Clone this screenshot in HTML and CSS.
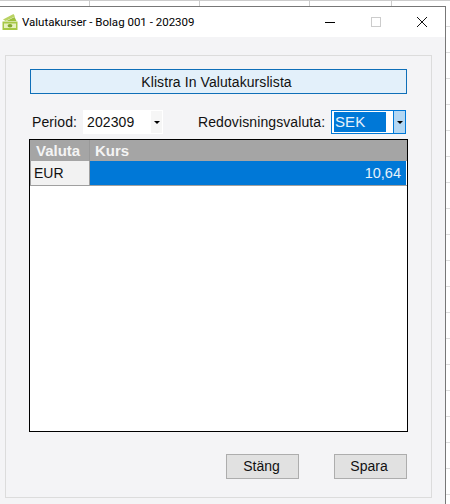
FILE: index.html
```html
<!DOCTYPE html>
<html lang="sv">

<head>
  <meta charset="UTF-8">
  <title>Valutakurser - Bolag 001 - 202309</title>
  <link rel="stylesheet" href="styles.css">
</head>

<body>
  <div class="sheet-top"></div>
  <div class="window">
    <div class="titlebar">
      <svg class="app-icon" width="18" height="18" viewBox="0 0 18 18">
        <path d="M2 6.5 L12.5 1 L14 3.5 L4.5 8 Z" fill="#b9d263" />
        <path d="M5.5 8 L13.5 4 L15.5 8 Z" fill="#9cc03c" />
        <rect x="1.5" y="8.5" width="15" height="8.5" fill="#a6c845" />
        <rect x="3" y="10.5" width="12" height="4.5" fill="#e6f0bf" />
        <ellipse cx="9" cy="12.7" rx="2.4" ry="1.8" fill="#83a92e" />
      </svg>
      <span class="title">Valutakurser - Bolag 001 - 202309</span>
      <div class="controls">
        <svg width="12" height="12" viewBox="0 0 12 12"><path d="M1 6.5 H11" stroke="#000" stroke-width="1" /></svg>
        <svg width="12" height="12" viewBox="0 0 12 12"><rect x="1.5" y="1.5" width="9" height="9" fill="none" stroke="#ccc" /></svg>
        <svg width="12" height="12" viewBox="0 0 12 12"><path d="M1 1 L11 11 M11 1 L1 11" stroke="#111" stroke-width="1" /></svg>
      </div>
    </div>
    <div class="content">
      <div class="group">
        <div class="paste-btn">Klistra In Valutakurslista</div>
        <div class="filters">
          <label class="lbl">Period:</label>
          <div class="period">
            <span class="period-val">202309</span>
            <span class="period-arrow"><i class="caret"></i></span>
          </div>
          <label class="lbl lbl-cur">Redovisningsvaluta:</label>
          <div class="currency">
            <span class="currency-val">SEK</span>
            <span class="currency-arrow"><i class="caret"></i></span>
          </div>
        </div>
        <div class="grid">
          <div class="grid-head">
            <div class="col-valuta">Valuta</div>
            <div class="col-kurs">Kurs</div>
          </div>
          <div class="grid-row">
            <div class="col-valuta">EUR</div>
            <div class="col-kurs">10,64</div>
          </div>
        </div>
        <div class="actions">
          <div class="btn btn-close">Stäng</div>
          <div class="btn btn-save">Spara</div>
        </div>
      </div>
    </div>
  </div>
</body>

</html>
```

FILE: styles.css
```css
html,
body {
  margin: 0;
  height: 504px;
  overflow: hidden;
}

body {
  width: 450px;
  background-color: #fff;
  background-image:
    linear-gradient(#ddd 1px, transparent 1px);
  background-size: 100% 26px;
  font-family: "Liberation Sans", Arial, sans-serif;
  color: #111;
}

/* spreadsheet behind the dialog */
.sheet-top {
  height: 6px;
  background-color: #fff;
  background-image:
    linear-gradient(#ccc, #ccc),
    linear-gradient(#ccc, #ccc),
    linear-gradient(#ccc, #ccc),
    linear-gradient(#ccc, #ccc),
    linear-gradient(#ccc, #ccc);
  background-repeat: no-repeat;
  background-size: 100% 1px, 1px 100%, 1px 100%, 1px 100%, 1px 100%;
  background-position: 0 0, 89px 0, 199px 0, 309px 0, 391px 0;
}

.window {
  width: 446px;
  height: 498px;
  box-sizing: border-box;
  border-top: 1px solid #777;
  border-right: 1px solid #777;
  background-color: #f4f4f6;
}

/* title bar */
.titlebar {
  display: flex;
  align-items: center;
  height: 30px;
  background-color: #fff;
  padding-left: 1px;
}

.app-icon {
  flex: none;
}

.title {
  margin-left: 3px;
  font-family: Roboto, sans-serif;
  font-size: 11.5px;
  color: #000;
}

.controls {
  display: flex;
  gap: 34px;
  margin-left: auto;
  margin-right: 17px;
}

/* form */
.content {
  padding: 18px 13px 0 5px;
}

.group {
  box-sizing: border-box;
  height: 443px;
  border: 1px solid #dcdcdc;
  padding: 13px 24px 0 24px;
}

.paste-btn {
  height: 25px;
  box-sizing: border-box;
  padding-right: 4px;
  border: 1px solid #0f6fb8;
  background-color: #e3f0fa;
  text-align: center;
  font-size: 14px;
  letter-spacing: .08px;
  line-height: 24px;
}

.filters {
  display: flex;
  align-items: center;
  height: 24px;
  margin-top: 16px;
  font-size: 14px;
  letter-spacing: .1px;
}

.lbl {
  margin-left: 2px;
  width: 51px;
}

.period {
  display: flex;
  align-items: center;
  width: 80px;
  height: 24px;
  background-color: #fff;
}

.period-val {
  flex: 1;
  padding-left: 4px;
}

.period-arrow {
  display: flex;
  align-items: center;
  justify-content: center;
  width: 11px;
  height: 22px;
  margin-right: 1px;
  background-color: #f6f6f6;
}

.caret {
  width: 0;
  height: 0;
  border-left: 3px solid transparent;
  border-right: 3px solid transparent;
  border-top: 3px solid #000;
}

.lbl-cur {
  width: 133px;
  margin-left: 35px;
}

.currency {
  display: flex;
  align-items: stretch;
  box-sizing: border-box;
  flex: none;
  width: 75px;
  height: 24px;
  border: 1px solid #0078d7;
  background-color: #fff;
}

.currency-val {
  flex: 1;
  margin: 1px 7px 1px 2px;
  padding-left: 1px;
  background-color: #0078d7;
  color: #e6f1fb;
  font-size: 15px;
  line-height: 20px;
}

.currency-arrow {
  display: flex;
  align-items: center;
  justify-content: center;
  box-sizing: border-box;
  width: 12px;
  background-color: #b3d7f3;
  border-left: 1px solid #0078d7;
}

.grid {
  box-sizing: border-box;
  width: 379px;
  height: 293px;
  margin-top: 5px;
  margin-left: -1px;
  border: 1px solid #000;
  background-color: #fff;
  font-size: 14px;
}

.grid-head,
.grid-row {
  display: flex;
}

.grid-head {
  height: 21px;
  background-color: #a5a5a5;
  color: #f4f4f4;
  font-size: 15px;
  font-weight: bold;
  line-height: 21px;
}

.grid-head .col-valuta {
  box-sizing: border-box;
  width: 60px;
  padding-left: 6px;
  border-right: 1px solid #999;
}

.grid-head .col-kurs {
  padding-left: 5px;
}

.grid-row {
  height: 25px;
  box-sizing: border-box;
  border-bottom: 1px solid #a0a0a0;
  line-height: 24px;
}

.grid-row .col-valuta {
  box-sizing: border-box;
  width: 60px;
  padding-left: 3px;
  background-color: #f2f2f2;
  border-left: 1px solid #a0a0a0;
  border-right: 1px solid #a0a0a0;
}

.grid-row .col-kurs {
  flex: 1;
  margin-right: 1px;
  padding-right: 5px;
  background-color: #0078d7;
  color: #e6f1fb;
  text-align: right;
  font-size: 14.5px;
}

.actions {
  display: flex;
  justify-content: flex-end;
  gap: 35px;
  margin-top: 22px;
}

.btn {
  box-sizing: border-box;
  width: 73px;
  height: 25px;
  border: 1px solid #adadad;
  background-color: #e1e1e1;
  text-align: center;
  font-size: 14px;
  line-height: 23px;
}

.btn-close {
  padding-right: 2px;
}

.btn-save {
  padding-right: 3px;
}
```
